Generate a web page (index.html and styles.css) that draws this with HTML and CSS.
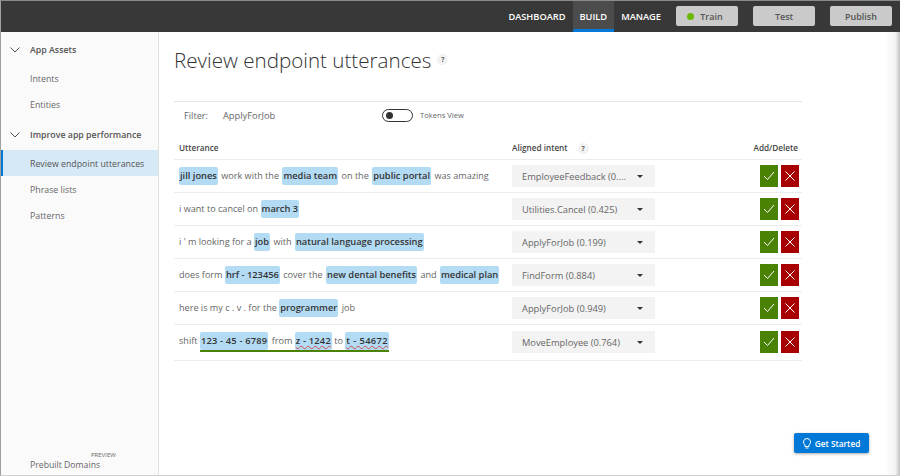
FILE: index.html
```html
<!DOCTYPE html>
<html lang="en">
<head>
    <meta charset="UTF-8">
    <meta name="viewport" content="width=device-width, initial-scale=1.0">
    <title>Review endpoint utterances</title>
    <link rel="stylesheet" href="styles.css">
</head>
<body>
    <div class="window">
        <header class="topbar">
            <nav class="topnav">
                <a class="topnav-link">DASHBOARD</a>
                <a class="topnav-link active">BUILD</a>
                <a class="topnav-link">MANAGE</a>
            </nav>
            <div class="top-actions">
                <button class="top-btn train"><span class="dot"></span>Train</button>
                <button class="top-btn">Test</button>
                <button class="top-btn">Publish</button>
            </div>
        </header>

        <div class="body-wrap">
            <aside class="sidebar">
                <div class="side-head">
                    <svg class="chev" width="10" height="6" viewBox="0 0 10 6"><path d="M.5.5L5 5l4.500-4.500" fill="none" stroke="#555" stroke-width="1"/></svg>
                    App Assets
                </div>
                <a class="side-link">Intents</a>
                <a class="side-link">Entities</a>
                <div class="side-head second">
                    <svg class="chev" width="10" height="6" viewBox="0 0 10 6"><path d="M.5.5L5 5l4.500-4.500" fill="none" stroke="#555" stroke-width="1"/></svg>
                    Improve app performance
                </div>
                <a class="side-link current">Review endpoint utterances</a>
                <a class="side-link">Phrase lists</a>
                <a class="side-link">Patterns</a>
                <div class="side-foot">
                    <span class="preview">PREVIEW</span>
                    <span>Prebuilt Domains</span>
                </div>
            </aside>

            <main class="content">
                <h1 class="title">Review endpoint utterances <span class="help big">?</span></h1>

                <div class="filter-bar">
                    <span class="filter-label">Filter:</span>
                    <span class="filter-value">ApplyForJob</span>
                    <span class="toggle"><span class="knob"></span></span>
                    <span class="toggle-label">Tokens View</span>
                </div>

                <div class="row head-row">
                    <div class="col-utt">Utterance</div>
                    <div class="col-intent">Aligned intent <span class="help">?</span></div>
                    <div class="col-act">Add/Delete</div>
                </div>

                <div class="row">
                    <div class="col-utt"><b>jill jones</b> work with the <b>media team</b> on the <b>public portal</b> was amazing</div>
                    <div class="col-intent"><div class="select"><span>EmployeeFeedback (0....</span><i class="caret"></i></div></div>
                    <div class="col-act">
                        <button class="ok"><svg width="12" height="10" viewBox="0 0 12 10"><path d="M1 5l3.500 3.500L11 1" fill="none" stroke="#fff" stroke-width="1"/></svg></button>
                        <button class="del"><svg width="10" height="10" viewBox="0 0 10 10"><path d="M.5.5l9 9M9.500.5l-9 9" fill="none" stroke="#fff" stroke-width="1"/></svg></button>
                    </div>
                </div>
                <div class="row">
                    <div class="col-utt">i want to cancel on <b>march 3</b></div>
                    <div class="col-intent"><div class="select"><span>Utilities.Cancel (0.425)</span><i class="caret"></i></div></div>
                    <div class="col-act">
                        <button class="ok"><svg width="12" height="10" viewBox="0 0 12 10"><path d="M1 5l3.500 3.500L11 1" fill="none" stroke="#fff" stroke-width="1"/></svg></button>
                        <button class="del"><svg width="10" height="10" viewBox="0 0 10 10"><path d="M.5.5l9 9M9.500.5l-9 9" fill="none" stroke="#fff" stroke-width="1"/></svg></button>
                    </div>
                </div>
                <div class="row">
                    <div class="col-utt">i ' m looking for a <b>job</b> with <b>natural language processing</b></div>
                    <div class="col-intent"><div class="select"><span>ApplyForJob (0.199)</span><i class="caret"></i></div></div>
                    <div class="col-act">
                        <button class="ok"><svg width="12" height="10" viewBox="0 0 12 10"><path d="M1 5l3.500 3.500L11 1" fill="none" stroke="#fff" stroke-width="1"/></svg></button>
                        <button class="del"><svg width="10" height="10" viewBox="0 0 10 10"><path d="M.5.5l9 9M9.500.5l-9 9" fill="none" stroke="#fff" stroke-width="1"/></svg></button>
                    </div>
                </div>
                <div class="row">
                    <div class="col-utt">does form <b>hrf - 123456</b> cover the <b>new dental benefits</b> and <b>medical plan</b></div>
                    <div class="col-intent"><div class="select"><span>FindForm (0.884)</span><i class="caret"></i></div></div>
                    <div class="col-act">
                        <button class="ok"><svg width="12" height="10" viewBox="0 0 12 10"><path d="M1 5l3.500 3.500L11 1" fill="none" stroke="#fff" stroke-width="1"/></svg></button>
                        <button class="del"><svg width="10" height="10" viewBox="0 0 10 10"><path d="M.5.5l9 9M9.500.5l-9 9" fill="none" stroke="#fff" stroke-width="1"/></svg></button>
                    </div>
                </div>
                <div class="row">
                    <div class="col-utt">here is my c . v . for the <b>programmer</b> job</div>
                    <div class="col-intent"><div class="select"><span>ApplyForJob (0.949)</span><i class="caret"></i></div></div>
                    <div class="col-act">
                        <button class="ok"><svg width="12" height="10" viewBox="0 0 12 10"><path d="M1 5l3.500 3.500L11 1" fill="none" stroke="#fff" stroke-width="1"/></svg></button>
                        <button class="del"><svg width="10" height="10" viewBox="0 0 10 10"><path d="M.5.5l9 9M9.500.5l-9 9" fill="none" stroke="#fff" stroke-width="1"/></svg></button>
                    </div>
                </div>
                <div class="row last">
                    <div class="col-utt">shift <span class="composite"><b>123 - 45 - 6789</b> from <b class="wavy">z - 1242</b> to <b class="wavy">t - 54672</b></span></div>
                    <div class="col-intent"><div class="select"><span>MoveEmployee (0.764)</span><i class="caret"></i></div></div>
                    <div class="col-act">
                        <button class="ok"><svg width="12" height="10" viewBox="0 0 12 10"><path d="M1 5l3.500 3.500L11 1" fill="none" stroke="#fff" stroke-width="1"/></svg></button>
                        <button class="del"><svg width="10" height="10" viewBox="0 0 10 10"><path d="M.5.5l9 9M9.500.5l-9 9" fill="none" stroke="#fff" stroke-width="1"/></svg></button>
                    </div>
                </div>
            </main>
        </div>

        <button class="get-started">
            <svg width="8" height="11" viewBox="0 0 8 11"><path d="M4 .5a3.500 3.500 0 0 1 2 6.400V8.500H2V6.900A3.500 3.500 0 0 1 4 .5zM2.500 10h3" fill="none" stroke="#fff" stroke-width="1"/></svg>
            Get Started
        </button>
        <div class="edge-shadow"></div>
    </div>
</body>
</html>
```

FILE: styles.css
```css
* {
    box-sizing: border-box;
}

html, body {
    margin: 0;
    height: 100%;
    overflow: hidden;
}

body {
    font-family: "Open Sans", "Noto Sans", sans-serif;
    font-size: 9.1px;
    color: #666;
    background: #fff;
}

button {
    font-family: inherit;
    border: none;
    padding: 0;
}

.window {
    position: relative;
    display: flex;
    flex-direction: column;
    width: 900px;
    height: 476px;
    border-top: 1px solid #8a8a8a;
    border-left: 1px solid #a0a0a0;
    border-bottom: 1px solid #d0d0d0;
}

/* top bar */
.topbar {
    display: flex;
    justify-content: flex-end;
    flex-shrink: 0;
    height: 31px;
    padding-right: 8px;
    background: #383838;
}

.topnav {
    display: flex;
}

.topnav-link {
    display: flex;
    align-items: center;
    padding: 0 7px;
    font-size: 9.25px;
    font-weight: 600;
    color: #fff;
}

.topnav-link.active {
    background: #4c4c4c;
    border-bottom: 3px solid #0078d7;
    padding-top: 3px;
}

.top-actions {
    display: flex;
    gap: 15px;
    margin-left: 8px;
    padding-top: 5px;
}

.top-btn {
    display: flex;
    align-items: center;
    justify-content: center;
    width: 62px;
    height: 20px;
    border-radius: 2px;
    background: #cacaca;
    color: #555;
    font-size: 9px;
    font-weight: 600;
}

.top-btn.train {
    padding-right: 4px;
}

.dot {
    width: 7px;
    height: 7px;
    margin-right: 6px;
    border-radius: 50%;
    background: #6bb700;
}

/* left nav */
.body-wrap {
    display: flex;
    flex: 1;
    min-height: 0;
}

.sidebar {
    display: flex;
    flex-direction: column;
    flex-shrink: 0;
    width: 158px;
    padding-top: 5px;
    background: #fafafa;
    border-right: 1px solid #e0e0e0;
    font-size: 8.8px;
}

.side-head {
    display: flex;
    align-items: center;
    height: 26px;
    padding-left: 9px;
    font-weight: 600;
    color: #555;
}

.side-head.second {
    margin-top: 4px;
}

.chev {
    margin-right: 10px;
}

.side-link {
    display: flex;
    align-items: center;
    height: 26px;
    padding-left: 29px;
}

.sidebar .side-head + .side-link {
    margin-top: 3px;
}

.sidebar .side-link.current {
    margin-top: 2px;
    margin-bottom: 1px;
    padding: 2px 0 0 27px;
    background: #d5e9f6;
    border-left: 2px solid #0078d7;
    color: #555;
}

.side-foot {
    display: flex;
    flex-direction: column;
    margin-top: auto;
    padding: 0 0 4px 29px;
    font-size: 8.7px;
}

.preview {
    align-self: flex-start;
    margin-left: 61px;
    font-size: 6px;
    line-height: 7px;
}

/* main area */
.content {
    flex: 1;
    min-width: 0;
    padding: 0 98px 0 15px;
}

.title {
    display: flex;
    align-items: center;
    gap: 6px;
    height: 69px;
    margin: 0;
    padding-bottom: 14px;
    font-size: 20.6px;
    font-weight: 300;
    color: #333;
}

.help {
    display: inline-flex;
    align-items: center;
    justify-content: center;
    width: 11px;
    height: 11px;
    border-radius: 50%;
    background: #f2f2f2;
    font-size: 7px;
    font-weight: 600;
    letter-spacing: 0;
    color: #444;
}

.filter-bar {
    display: flex;
    align-items: center;
    height: 29px;
    padding: 0 0 2px 10px;
    border-top: 1px solid #e6e6e6;
    font-size: 9.2px;
}

.filter-value {
    margin-left: 15px;
    width: 159px;
    font-size: 9.3px;
}

.toggle {
    display: flex;
    align-items: center;
    width: 31px;
    height: 13px;
    padding-left: 3px;
    border: 1px solid #333;
    border-radius: 7px;
}

.knob {
    width: 7px;
    height: 7px;
    border-radius: 50%;
    background: #333;
}

.toggle-label {
    margin-left: 7px;
    font-size: 7.6px;
}

.row {
    display: flex;
    align-items: center;
    height: 33px;
    padding-left: 5px;
    border-bottom: 1px solid #ececec;
}

.head-row {
    height: 30px;
    padding-top: 6px;
    font-size: 8.2px;
    font-weight: 600;
    color: #444;
}

.row.last {
    align-items: flex-start;
    height: 36px;
    padding-top: 6px;
}

.col-utt {
    width: 333px;
    white-space: nowrap;
}

.col-utt b {
    display: inline-block;
    height: 18px;
    margin: 0 1px;
    padding: 0 1px;
    border-radius: 2px;
    background: #b3dbf3;
    font-size: 9.3px;
    line-height: 17px;
    font-weight: 600;
    color: #333;
}

.col-utt b:first-child {
    margin-left: 0;
}

.composite {
    display: inline-block;
    border-bottom: 2px solid #498205;
    line-height: 19px;
}

.composite b {
    letter-spacing: 0.2px;
}

.composite .wavy {
    margin: 0;
    text-decoration: underline wavy #cc4b4b 1px;
}

.composite .wavy:last-child {
    letter-spacing: 0.4px;
}

.col-intent {
    width: 248px;
}

.head-row .help {
    margin-left: 8px;
}

.select {
    display: flex;
    align-items: center;
    justify-content: space-between;
    width: 143px;
    height: 22px;
    padding: 0 12px 0 10px;
    background: #f3f3f3;
    font-size: 9.3px;
    white-space: nowrap;
}

.caret {
    width: 0;
    height: 0;
    border-left: 3.5px solid transparent;
    border-right: 3.5px solid transparent;
    border-top: 3.5px solid #333;
}

.col-act {
    display: flex;
    flex: none;
    justify-content: flex-end;
    gap: 3px;
    width: 42px;
    padding-right: 3px;
    white-space: nowrap;
}

.head-row .col-act {
    padding-right: 4px;
}

.col-act button {
    display: flex;
    align-items: center;
    justify-content: center;
    width: 18px;
    height: 22px;
}

.ok {
    background: #498205;
}

.del {
    background: #a80000;
}

/* floats over the page */
.get-started {
    position: absolute;
    left: 793px;
    top: 432px;
    display: flex;
    align-items: center;
    justify-content: center;
    gap: 4px;
    width: 75px;
    height: 20px;
    border-radius: 2px;
    background: #0078d7;
    box-shadow: 0 1px 3px rgba(0, 0, 0, 0.35);
    color: #fff;
    font-size: 8.3px;
    font-weight: 600;
}

.edge-shadow {
    position: absolute;
    top: 31px;
    right: 0;
    bottom: 0;
    width: 16px;
    background: linear-gradient(to right, rgba(120, 120, 120, 0), rgba(120, 120, 120, 0.08) 70%, rgba(120, 120, 120, 0.45));
}
```
